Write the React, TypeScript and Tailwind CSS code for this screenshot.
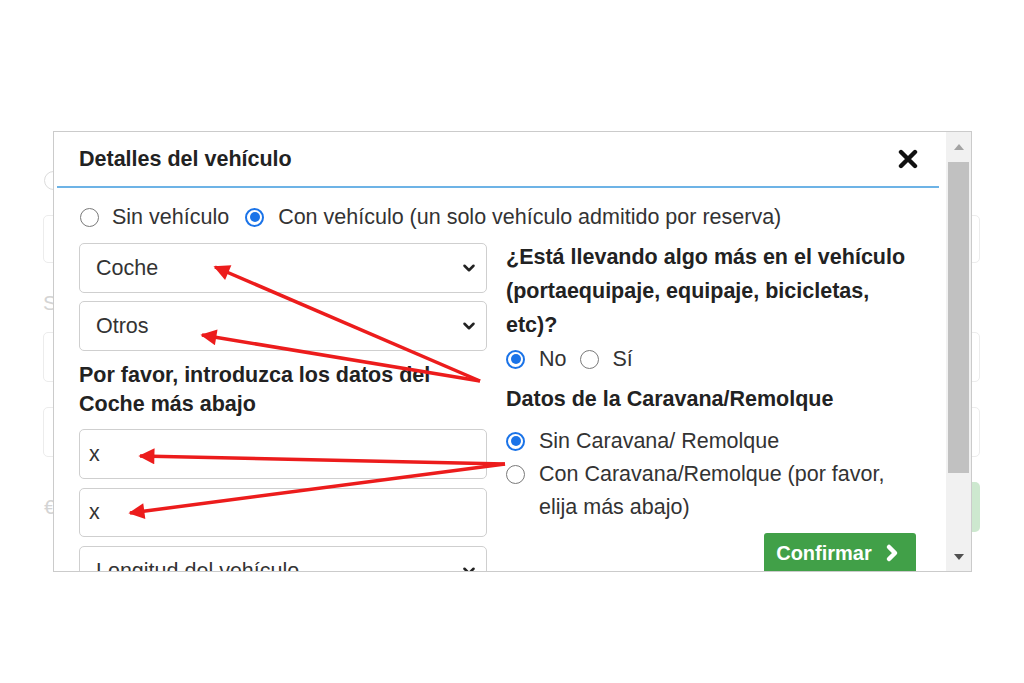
import { ChevronDown, ChevronRight } from "lucide-react";

const FONT = "font-['Liberation_Sans',Arial,sans-serif]";

function Radio({ checked }: { checked?: boolean }) {
  if (checked) {
    return (
      <span className="flex h-[19px] w-[19px] shrink-0 items-center justify-center rounded-full border-2 border-[#1a73e8] bg-white">
        <span className="h-[10px] w-[10px] rounded-full bg-[#1a73e8]" />
      </span>
    );
  }
  return <span className="block h-[19px] w-[19px] shrink-0 rounded-full border-[1.5px] border-[#7a7a7a] bg-white" />;
}

function SelectBox({ label, className = "" }: { label: string; className?: string }) {
  return (
    <div
      className={`flex h-[50px] items-center justify-between rounded-[5px] border border-[#cfcfcf] pl-[16px] pr-[8px] text-[#333] ${className}`}
    >
      <span>{label}</span>
      <ChevronDown size={18} strokeWidth={3.4} className="text-[#222]" />
    </div>
  );
}

function Arrows() {
  const lines: Array<[number, number, number, number]> = [
    [480, 381, 215, 267],
    [480, 381, 202, 335],
    [505, 464, 140, 456],
    [505, 464, 130, 513],
  ];
  return (
    <svg className="pointer-events-none absolute inset-0" width={1024} height={683}>
      <defs>
        <marker
          id="head"
          viewBox="0 0 10 10"
          refX={9}
          refY={5}
          markerWidth={24}
          markerHeight={16}
          markerUnits="userSpaceOnUse"
          orient="auto"
        >
          <path d="M0,0 L10,5 L0,10 z" fill="#ec1c1c" />
        </marker>
      </defs>
      {lines.map(([x1, y1, x2, y2], i) => (
        <line
          key={i}
          x1={x1}
          y1={y1}
          x2={x2}
          y2={y2}
          stroke="#ec1c1c"
          strokeWidth={3.5}
          markerEnd="url(#head)"
        />
      ))}
    </svg>
  );
}

export default function App() {
  return (
    <div className={`relative h-[683px] w-[1024px] overflow-hidden bg-white ${FONT}`}>
      {/* page behind the dialog, faded */}
      <div className="ml-[43px] w-[937px] pt-[171px] text-[21px] text-[#d4d4d4]">
        <div className="ml-[1px] h-[19px] w-[19px] rounded-full border-[1.5px] border-[#dcdcdc]" />
        <div className="mt-[25px] flex justify-between">
          <div className="h-[48px] w-[430px] rounded-[5px] border border-[#ececec]" />
          <div className="h-[48px] w-[430px] rounded-[5px] border border-[#ececec]" />
        </div>
        <div className="mt-[28px] leading-[24px]">S</div>
        <div className="mt-[17px] flex justify-between">
          <div className="h-[50px] w-[430px] rounded-[5px] border border-[#ececec]" />
          <div className="h-[50px] w-[430px] rounded-[5px] border border-[#ececec]" />
        </div>
        <div className="mt-[25px] flex justify-between">
          <div className="h-[50px] w-[430px] rounded-[5px] border border-[#ececec]" />
          <div className="h-[50px] w-[430px] rounded-[5px] border border-[#ececec]" />
        </div>
        <div className="mt-[25px] flex items-center justify-between">
          <span className="ml-[1px]">€</span>
          <div className="h-[50px] w-[200px] rounded-[5px] bg-[#cde8cf]" />
        </div>
      </div>

      {/* dialog */}
      <div className="absolute left-[53px] top-[131px] flex h-[441px] w-[919px] overflow-hidden border border-[#cbcbcb] bg-white text-[21.5px]">
        <div className="min-w-0 flex-1">
          <div className="flex h-[54px] items-center justify-between pl-[25px] pr-[28px]">
            <h2 className="font-bold text-[#222]">Detalles del vehículo</h2>
            <svg width="20" height="20" viewBox="0 0 20 20">
              <path d="M3 3 L17 17 M17 3 L3 17" stroke="#111" strokeWidth="4.4" strokeLinecap="round" />
            </svg>
          </div>
          <div className="ml-[3px] mr-[7px] h-[2px] bg-[#6db3e6]" />

          <div className="pl-[25px] pt-[14px]">
            <div className="flex h-[30px] items-center text-[#333]">
              <span className="ml-[1px] flex">
                <Radio />
              </span>
              <span className="ml-[13px]">Sin vehículo</span>
              <span className="ml-[16px] flex">
                <Radio checked />
              </span>
              <span className="ml-[14px]">Con vehículo (un solo vehículo admitido por reserva)</span>
            </div>

            <div className="mt-[8px] flex gap-[19px]">
              <div className="w-[408px] shrink-0 pt-[3px]">
                <SelectBox label="Coche" />
                <SelectBox label="Otros" className="mt-[8px]" />
                <p className="mt-[10px] font-bold leading-[29px] text-[#222]">
                  Por favor, introduzca los datos del Coche más abajo
                </p>
                <div className="mt-[10px] flex h-[50px] items-center rounded-[5px] border border-[#cfcfcf] pl-[9px] text-[#333]">
                  x
                </div>
                <div className="mt-[9px] flex h-[49px] items-center rounded-[5px] border border-[#cfcfcf] pl-[9px] text-[#333]">
                  x
                </div>
                <SelectBox label="Longitud del vehículo" className="mt-[9px]" />
              </div>

              <div className="w-[412px] shrink-0">
                <p className="font-bold leading-[34px] text-[#222]">
                  ¿Está llevando algo más en el vehículo (portaequipaje, equipaje, bicicletas, etc)?
                </p>
                <div className="flex h-[34px] items-center text-[#333]">
                  <Radio checked />
                  <span className="ml-[14px]">No</span>
                  <span className="ml-[14px] flex">
                    <Radio />
                  </span>
                  <span className="ml-[13px]">Sí</span>
                </div>
                <p className="mt-[6px] font-bold leading-[34px] text-[#222]">Datos de la Caravana/Remolque</p>
                <div className="mt-[8px] flex h-[34px] items-center text-[#333]">
                  <Radio checked />
                  <span className="ml-[14px]">Sin Caravana/ Remolque</span>
                </div>
                <div className="flex items-start text-[#333]">
                  <span className="mt-[7px] flex">
                    <Radio />
                  </span>
                  <span className="ml-[14px] leading-[33px]">Con Caravana/Remolque (por favor, elija más abajo)</span>
                </div>
                <div className="mt-[9px] flex justify-end pr-[2px]">
                  <button className="flex h-[40px] w-[152px] items-center justify-center gap-[8px] rounded-[3px] bg-[#41a048] text-[20px] font-bold text-white">
                    Confirmar
                    <ChevronRight size={24} strokeWidth={4.5} />
                  </button>
                </div>
              </div>
            </div>
          </div>
        </div>

        {/* scrollbar */}
        <div className="flex w-[25px] shrink-0 flex-col items-center bg-[#f1f1f1]">
          <div className="flex h-[30px] items-center justify-center">
            <svg width="10" height="6" viewBox="0 0 10 6">
              <path d="M0 6 L5 0 L10 6 z" fill="#a3a3a3" />
            </svg>
          </div>
          <div className="h-[311px] w-[21px] bg-[#c1c1c1]" />
          <div className="flex flex-1 items-end justify-center pb-[11px]">
            <svg width="10" height="6" viewBox="0 0 10 6">
              <path d="M0 0 L10 0 L5 6 z" fill="#505050" />
            </svg>
          </div>
        </div>
      </div>

      <Arrows />
    </div>
  );
}
